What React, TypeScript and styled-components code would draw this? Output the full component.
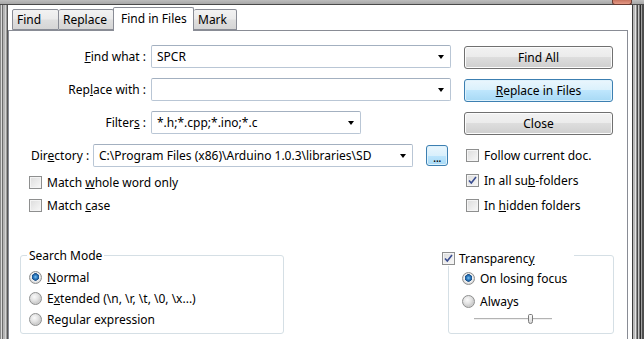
import styled, { createGlobalStyle } from "styled-components";

const GlobalStyle = createGlobalStyle`
  html, body { margin: 0; padding: 0; background: #fff; }
  body {
    font-family: "Noto Sans", "Open Sans", sans-serif;
    font-size: 12px;
    color: #000;
  }
`;

const Window = styled.div`
  width: 644px;
  height: 339px;
  overflow: hidden;
  display: flex;
  flex-direction: column;
  background: #fff;
`;

const TitleEdge = styled.div`
  flex: none;
  height: 5px;
  display: flex;
  justify-content: flex-end;
  padding-right: 12px;
  background: linear-gradient(#bdbdbd, #a9a9a9 75%, #4a4a4a 75%);
`;

const CloseStub = styled.div`
  width: 18px;
  height: 4px;
  background: linear-gradient(#c9745f, #e59a86);
  border: 1px solid #6b3a30;
  border-top: none;
  border-radius: 0 0 3px 3px;
`;

const Body = styled.div`
  flex: 1;
  display: flex;
  min-height: 0;
`;

const LeftEdge = styled.div`
  flex: none;
  width: 8px;
  background: linear-gradient(
    to right,
    #8a8a8a 0 1px,
    #d9d9d9 1px 2px,
    #6e6e6e 2px 3px,
    #b4b4b4 3px 5px,
    #d4d4d4 5px 6px,
    #9a9a9a 6px 7px,
    #555 7px 8px
  );
`;

const RightEdge = styled.div`
  flex: none;
  width: 12px;
  background: linear-gradient(
    to right,
    #3c3c3c 0 1px,
    #b8b8b8 1px 3px,
    #e2e2e2 3px 4px,
    #8c8c8c 4px 5px,
    #4a4a4a 5px 6px,
    #c4c4c4 6px 7px,
    #7a7a7a 7px 8px,
    #2e2e2e 8px 9px,
    #a2a2a2 9px 10px,
    #4e4e4e 10px 12px
  );
`;

const Client = styled.div`
  flex: 1;
  display: flex;
  flex-direction: column;
  padding-right: 4px;
`;

const TabStrip = styled.div`
  flex: none;
  height: 25px;
  display: flex;
  align-items: flex-end;
  padding-left: 4px;
`;

const Tab = styled.div<{ $active?: boolean; $width: number; $first?: boolean }>`
  position: relative;
  width: ${(p) => p.$width}px;
  height: ${(p) => (p.$active ? "24px" : "21px")};
  margin: ${(p) => (p.$active ? "0 0 -1px -1px" : "0")};
  z-index: ${(p) => (p.$active ? 1 : 0)};
  padding: 0 0 ${(p) => (p.$active ? "3px" : "0")} ${(p) => (p.$active ? "7px" : "4px")};
  display: flex;
  align-items: center;
  box-sizing: border-box;
  border-top: 1px solid #898c95;
  border-right: 1px solid #898c95;
  border-bottom: ${(p) => (p.$active ? "none" : "1px solid #898c95")};
  border-left: ${(p) => (p.$active || p.$first ? "1px solid #898c95" : "none")};
  border-radius: 2px 2px 0 0;
  background: ${(p) =>
    p.$active ? "#fff" : "linear-gradient(#f2f2f2, #ebebeb 45%, #dedede 55%, #d5d5d5)"};
  white-space: nowrap;
`;

const Panel = styled.div`
  flex: 1;
  border: 1px solid #898c95;
  border-bottom: none;
  padding-top: 14px;
  display: flex;
  flex-direction: column;
`;

const TopArea = styled.div`
  display: flex;
`;

const LeftCol = styled.div`
  width: 446px;
  display: flex;
  flex-direction: column;
`;

const RightCol = styled.div`
  width: 149px;
  margin-left: 9px;
  padding-top: 1px;
  display: flex;
  flex-direction: column;
  gap: 10px;
`;

const FieldRow = styled.div<{ $gap?: number }>`
  display: flex;
  align-items: center;
  height: 23px;
  margin-top: ${(p) => p.$gap ?? 0}px;
`;

const Label = styled.div<{ $width: number; $indent?: number }>`
  width: ${(p) => p.$width}px;
  margin-left: ${(p) => p.$indent ?? 0}px;
  margin-right: 5px;
  text-align: right;
  white-space: nowrap;
`;

const Combo = styled.div<{ $width: number }>`
  width: ${(p) => p.$width}px;
  height: 23px;
  box-sizing: border-box;
  display: flex;
  align-items: center;
  padding-left: 5px;
  border: 1px solid #b9c6d5;
  border-top-color: #a3b0c0;
  border-radius: 2px;
  background: #fff;
  white-space: nowrap;
`;

const ComboText = styled.span`
  flex: 1;
  overflow: hidden;
`;

const Arrow = styled.span`
  width: 0;
  height: 0;
  margin: 0 6px 0 4px;
  border-left: 3.5px solid transparent;
  border-right: 3.5px solid transparent;
  border-top: 4px solid #000;
`;

const Button = styled.div<{ $focused?: boolean }>`
  height: 23px;
  box-sizing: border-box;
  display: flex;
  align-items: center;
  justify-content: center;
  border: 1px solid ${(p) => (p.$focused ? "#3c7fb1" : "#707070")};
  border-radius: 3px;
  box-shadow: inset 0 0 0 1px ${(p) => (p.$focused ? "#dff2fc" : "#fcfcfc")};
  background: ${(p) =>
    p.$focused
      ? "linear-gradient(#eaf6fd, #d9f0fc 50%, #bee6fd 50%, #a7d9f5)"
      : "linear-gradient(#f2f2f2, #ebebeb 50%, #dddddd 50%, #cfcfcf)"};
`;

const BrowseButton = styled(Button)`
  width: 22px;
  height: 21px;
  margin-left: 13px;
  align-items: flex-end;
  line-height: 14px;
  letter-spacing: -0.5px;
`;

const CheckRow = styled.div<{ $height: number; $indent?: number; $gap?: number }>`
  display: flex;
  align-items: center;
  height: ${(p) => p.$height}px;
  margin-left: ${(p) => p.$indent ?? 0}px;
  margin-top: ${(p) => p.$gap ?? 0}px;
  gap: 5px;
  white-space: nowrap;
`;

const Box = styled.span`
  flex: none;
  width: 13px;
  height: 13px;
  box-sizing: border-box;
  border: 1px solid #8e8f8f;
  background: linear-gradient(135deg, #dcdcdc, #f8f8f8);
  box-shadow: inset 0 0 0 1px #f4f4f4;
  display: flex;
  align-items: center;
  justify-content: center;
`;

const RadioDot = styled.span<{ $on?: boolean }>`
  flex: none;
  width: 13px;
  height: 13px;
  box-sizing: border-box;
  border-radius: 50%;
  border: 1px solid #8e8f8f;
  background: ${(p) =>
    p.$on
      ? "radial-gradient(circle at 50% 45%, #7fc2ee 0, #2a79c0 2px, #1b4f86 3.5px, #f3f3f3 4px, #d4d4d4 6px)"
      : "radial-gradient(circle at 40% 35%, #fafafa 0, #e2e2e2 4px, #cfcfcf 6px)"};
`;

const BottomRow = styled.div`
  display: flex;
  align-items: flex-start;
  margin-top: 37px;
`;

const GroupBox = styled.div<{ $left: number; $width: number }>`
  position: relative;
  margin-left: ${(p) => p.$left}px;
  width: ${(p) => p.$width}px;
  height: 79px;
  box-sizing: border-box;
  border: 1px solid #d5dfe5;
  border-radius: 3px;
  display: flex;
  flex-direction: column;
`;

const Caption = styled.div<{ $top: number; $left: number; $width?: number }>`
  position: absolute;
  top: ${(p) => p.$top}px;
  left: ${(p) => p.$left}px;
  ${(p) => (p.$width ? `width: ${p.$width}px;` : "")}
  height: 16px;
  padding: 0 2px;
  display: flex;
  align-items: center;
  gap: 4px;
  background: #fff;
  white-space: nowrap;
`;

const GroupRows = styled.div<{ $pad: number; $indent: number }>`
  padding-top: ${(p) => p.$pad}px;
  padding-left: ${(p) => p.$indent}px;
  display: flex;
  flex-direction: column;
`;

const Slider = styled.div`
  width: 78px;
  height: 12px;
  margin-left: 12px;
  display: flex;
  align-items: center;
  justify-content: flex-end;
  padding-right: 19px;
  box-sizing: border-box;
  background: linear-gradient(transparent 5px, #b3b3b3 5px, #b3b3b3 6px, #f0f0f0 6px, #f0f0f0 7px, transparent 7px);
`;

const Thumb = styled.span`
  width: 5px;
  height: 10px;
  box-sizing: border-box;
  border: 1px solid #7a7a7a;
  border-radius: 2px 2px 3px 3px;
  background: linear-gradient(#fdfdfd, #d8d8d8);
`;

function CheckBox({ checked }: { checked?: boolean }) {
  return (
    <Box>
      {checked && (
        <svg width="9" height="9" viewBox="0 0 9 9">
          <path d="M1 4.5 L3.3 7 L8 1" fill="none" stroke="#3a4d91" strokeWidth="1.6" />
        </svg>
      )}
    </Box>
  );
}

export default function App() {
  return (
    <>
      <GlobalStyle />
      <Window>
        <TitleEdge>
          <CloseStub />
        </TitleEdge>
        <Body>
          <LeftEdge />
          <Client>
            <TabStrip>
              <Tab $width={47} $first>
                Find
              </Tab>
              <Tab $width={55}>Replace</Tab>
              <Tab $width={81} $active>
                Find in Files
              </Tab>
              <Tab $width={43}>Mark</Tab>
            </TabStrip>
            <Panel>
              <TopArea>
                <LeftCol>
                  <FieldRow>
                    <Label $width={137}>
                      <u>F</u>ind what :
                    </Label>
                    <Combo $width={300}>
                      <ComboText>SPCR</ComboText>
                      <Arrow />
                    </Combo>
                  </FieldRow>
                  <FieldRow $gap={10}>
                    <Label $width={137}>
                      Rep<u>l</u>ace with :
                    </Label>
                    <Combo $width={300}>
                      <ComboText />
                      <Arrow />
                    </Combo>
                  </FieldRow>
                  <FieldRow $gap={10}>
                    <Label $width={137}>
                      Filter<u>s</u> :
                    </Label>
                    <Combo $width={210}>
                      <ComboText>*.h;*.cpp;*.ino;*.c</ComboText>
                      <Arrow />
                    </Combo>
                  </FieldRow>
                  <FieldRow $gap={10}>
                    <Label $width={57} $indent={22}>
                      Dir<u>e</u>ctory :
                    </Label>
                    <Combo $width={320}>
                      <ComboText>C:\Program Files (x86)\Arduino 1.0.3\libraries\SD</ComboText>
                      <Arrow />
                    </Combo>
                    <BrowseButton $focused>...</BrowseButton>
                  </FieldRow>
                  <CheckRow $height={16} $indent={20} $gap={7}>
                    <CheckBox />
                    <span>
                      Match <u>w</u>hole word only
                    </span>
                  </CheckRow>
                  <CheckRow $height={16} $indent={20} $gap={7}>
                    <CheckBox />
                    <span>
                      Match <u>c</u>ase
                    </span>
                  </CheckRow>
                </LeftCol>
                <RightCol>
                  <Button>Find All</Button>
                  <Button $focused>
                    <span>
                      <u>R</u>eplace in Files
                    </span>
                  </Button>
                  <Button>Close</Button>
                  <div>
                    <CheckRow $height={25} $indent={2} $gap={-2}>
                      <CheckBox />
                      <span>Follow current doc.</span>
                    </CheckRow>
                    <CheckRow $height={25} $indent={2}>
                      <CheckBox checked />
                      <span>
                        In all su<u>b</u>-folders
                      </span>
                    </CheckRow>
                    <CheckRow $height={25} $indent={2}>
                      <CheckBox />
                      <span>
                        In <u>h</u>idden folders
                      </span>
                    </CheckRow>
                  </div>
                </RightCol>
              </TopArea>
              <BottomRow>
                <GroupBox $left={11} $width={264}>
                  <Caption $top={-9} $left={6}>
                    Search Mode
                  </Caption>
                  <GroupRows $pad={11} $indent={8}>
                    <CheckRow $height={21}>
                      <RadioDot $on />
                      <span>
                        <u>N</u>ormal
                      </span>
                    </CheckRow>
                    <CheckRow $height={21}>
                      <RadioDot />
                      <span>
                        E<u>x</u>tended (\n, \r, \t, \0, \x...)
                      </span>
                    </CheckRow>
                    <CheckRow $height={21}>
                      <RadioDot />
                      <span>
                        Re<u>g</u>ular expression
                      </span>
                    </CheckRow>
                  </GroupRows>
                </GroupBox>
                <GroupBox $left={164} $width={166}>
                  <Caption $top={-6} $left={-9} $width={130}>
                    <CheckBox checked />
                    <span>
                      Transparenc<u>y</u>
                    </span>
                  </Caption>
                  <GroupRows $pad={11} $indent={13}>
                    <CheckRow $height={23}>
                      <RadioDot $on />
                      <span>On losing focus</span>
                    </CheckRow>
                    <CheckRow $height={23}>
                      <RadioDot />
                      <span>Always</span>
                    </CheckRow>
                    <Slider>
                      <Thumb />
                    </Slider>
                  </GroupRows>
                </GroupBox>
              </BottomRow>
            </Panel>
          </Client>
          <RightEdge />
        </Body>
      </Window>
    </>
  );
}
